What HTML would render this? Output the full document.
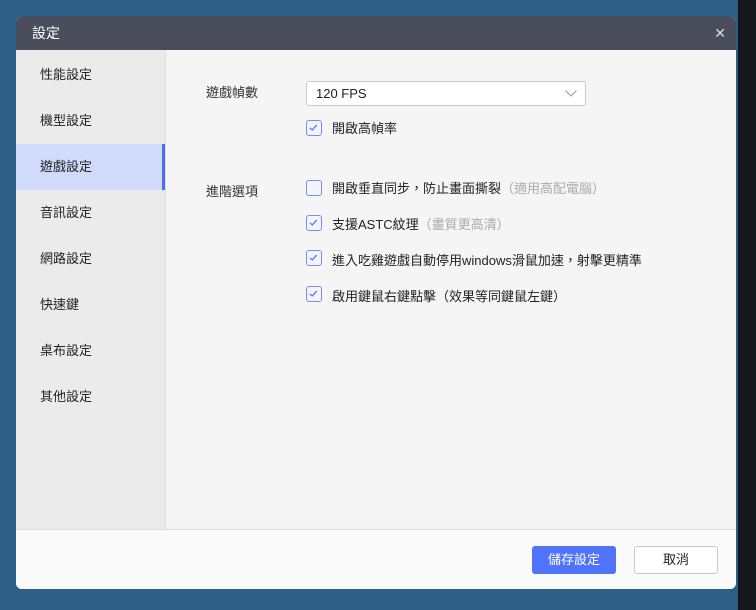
<!DOCTYPE html>
<html><head><meta charset="utf-8"><style>
*{margin:0;padding:0;box-sizing:border-box}
body{width:756px;height:610px;overflow:hidden;background:#2d5f86;font-family:"Liberation Sans","Noto Sans CJK TC",sans-serif;position:relative}
.rs{position:absolute;left:738px;top:0;width:18px;height:610px;background:#15171d}
.dlg{position:absolute;left:16px;top:16px;width:720px;height:573px;border-radius:6px;overflow:hidden;background:#f5f5f5}
.tb{height:34px;background:#4a4d5c;color:#fff;font-size:14px;line-height:34px;padding-left:16px;position:relative}
.x{position:absolute;right:10px;top:0;font-size:14px;color:#ddd}
.sb{position:absolute;left:0;top:34px;width:150px;height:479px;background:#ebebeb;border-right:1px solid #ddd;padding-top:2px}
.it{height:46px;line-height:46px;padding-left:24px;font-size:13px;color:#222}
.it.a{background:#d0dbfb;border-right:3px solid #4c6ef5}
.ft{position:absolute;left:0;top:513px;width:720px;height:60px;background:#fafafa;border-top:1px solid #ddd}
.lb{position:absolute;font-size:13px;color:#333}
.sel{position:absolute;left:290px;top:65px;width:280px;height:25px;border:1px solid #c8c8d0;border-radius:3px;background:#fff;font-size:13px;line-height:23px;padding-left:9px;color:#222}
.cb{position:absolute;left:290px;width:16px;height:16px;border:1.5px solid #7b8cf0;border-radius:3px;background:#f2f4ff}
.t{position:absolute;left:316px;font-size:13px;color:#222}
.g{color:#aaa}
.btn{position:absolute;top:530px;height:28px;border-radius:3px;font-size:13px;line-height:28px;text-align:center}
</style></head><body>
<div class="rs"></div>
<div class="dlg">
<div class="tb">設定<span class="x">✕</span></div>
<div class="sb">
<div class="it">性能設定</div><div class="it">機型設定</div><div class="it a">遊戲設定</div><div class="it">音訊設定</div><div class="it">網路設定</div><div class="it">快速鍵</div><div class="it">桌布設定</div><div class="it">其他設定</div>
</div>
<div class="lb" style="left:190px;top:66px">遊戲幀數</div>
<div class="sel">120 FPS<svg style="position:absolute;right:8px;top:8px" width="12" height="7"><path d="M0.5 0.5L6 6L11.5 0.5" fill="none" stroke="#999"/></svg></div>
<div class="lb" style="left:190px;top:165px">進階選項</div>
<svg width="0" height="0"><defs><symbol id="ck" viewBox="0 0 16 16"><path d="M3.5 8.5L6.5 11L12 5" fill="none" stroke="#5a6ee8" stroke-width="1.5"/></symbol></defs></svg>
<div class="cb" style="top:104px"><svg width="13" height="13"><use href="#ck"/></svg></div><div class="t" style="top:102px">開啟高幀率</div>
<div class="cb" style="top:164px"></div><div class="t" style="top:162px">開啟垂直同步，防止畫面撕裂<span class="g">（適用高配電腦）</span></div>
<div class="cb" style="top:199px"><svg width="13" height="13"><use href="#ck"/></svg></div><div class="t" style="top:198px">支援ASTC紋理<span class="g">（畫質更高清）</span></div>
<div class="cb" style="top:234px"><svg width="13" height="13"><use href="#ck"/></svg></div><div class="t" style="top:234px">進入吃雞遊戲自動停用windows滑鼠加速，射擊更精準</div>
<div class="cb" style="top:270px"><svg width="13" height="13"><use href="#ck"/></svg></div><div class="t" style="top:270px">啟用鍵鼠右鍵點擊（效果等同鍵鼠左鍵）</div>
<div class="ft"></div>
<div class="btn" style="left:516px;width:84px;background:#4f74fb;color:#fff">儲存設定</div>
<div class="btn" style="left:618px;width:84px;background:#fff;border:1px solid #c8c8d0;color:#222;line-height:26px">取消</div>
</div>
</body></html>
